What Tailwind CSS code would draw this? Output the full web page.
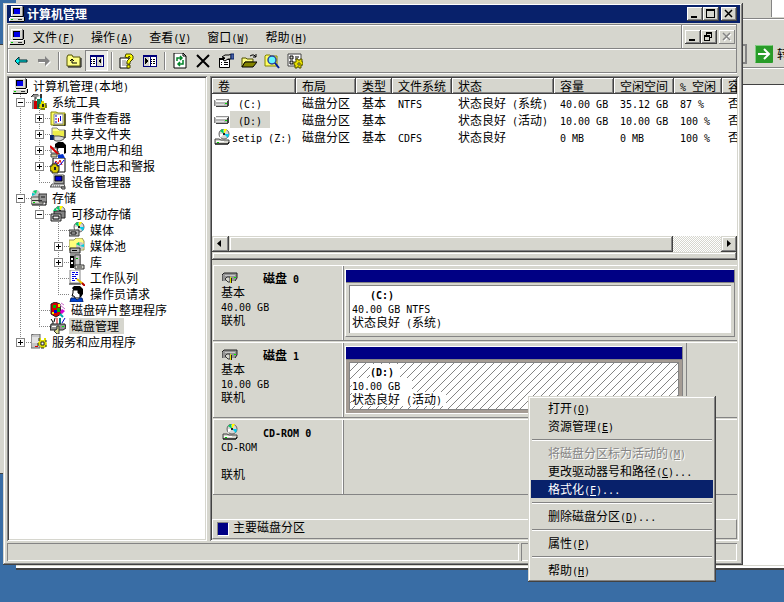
<!DOCTYPE html>
<html lang="zh-CN">
<head>
  <meta charset="UTF-8">
  <title>计算机管理</title>
  <script src="https://cdn.jsdelivr.net/npm/@tailwindcss/browser@4"></script>
</head>
<body class="relative h-screen overflow-hidden bg-[#396da5] font-['Noto_Sans_CJK_SC',sans-serif] text-xs leading-[14px] text-black select-none">

  <!-- icons -->
  <svg class="absolute size-0" aria-hidden="true" xmlns="http://www.w3.org/2000/svg">
    <defs>
      <symbol id="pc" viewBox="0 0 16 16"><path d="M3 0h11v10H3z" fill="#848484"/><path d="M2 0h11v10H2z" fill="#d6d6ce"/><path d="M2 0h11v1H3v9H2z" fill="#fff"/><path d="M4 2h7v6H4z" fill="#000"/><path d="M5 3h6v5H5z" fill="#0000e7"/><path d="M14 1h1v9h-1zM4 10h10v1H4z" fill="#000"/><path d="M1 11h14v4H1z" fill="#d6d6ce"/><path d="M1 11h13v1H1zM0 12h1v3H0z" fill="#fff"/><path d="M2 13h2v1H2z" fill="#0c0"/><path d="M9 13h4v1H9z" fill="#333"/><path d="M15 11h1v4h-1zM1 15h14v1H1z" fill="#000"/></symbol>
      <symbol id="tools" viewBox="0 0 16 16"><path d="M0 3l3-3h4l2 2-3 1v2H4V3z" fill="#949494"/><path d="M0 3l3-3h4M4 3v4" fill="none" stroke="#222"/><path d="M9 0h2v5H9z" fill="#333"/><path d="M3 7h3v8H3z" fill="#c00"/><path d="M6 5h3v10H6z" fill="#087b4a"/><path d="M9 4h2v8H9z" fill="#00a5ce"/><path d="M1 6h2v9H1z" fill="#848484"/><path d="M10 7h3v2h2v2h1v3h-2v2h-4v-2H8v-4h2z" fill="#dede00"/><path d="M10 7h1M8 10v3M15 9v5M9 15h5" stroke="#222"/><path d="M11 10h2v3h-2z" fill="#222"/></symbol>
      <symbol id="event" viewBox="0 0 16 16"><path d="M1 2h5l2 1h7v12H1z" fill="#ffff63" stroke="#848400"/><path d="M4 4h9v10H4z" fill="#fff" stroke="#848484"/><path d="M6 5v8" stroke="#00c" stroke-dasharray="2 1"/><path d="M8 8h1v4H8z" fill="#d00"/><path d="M10 6h1v5h-1z" fill="#00d"/><path d="M15 4v12H3" fill="none" stroke="#000"/></symbol>
      <symbol id="share" viewBox="0 0 16 16"><path d="M2 2h5l2 2h6v8H2z" fill="#ffff8c" stroke="#848484"/><path d="M3 5h11v6H3z" fill="#eded4a"/><path d="M0 9h4v5H0z" fill="#08246b"/><path d="M4 10h5l5 1v2l-4 2H6l-2-1z" fill="#d6d6d6" stroke="#555"/><path d="M15 4v8" stroke="#000"/></symbol>
      <symbol id="users" viewBox="0 0 16 16"><path d="M5 2l3-2h5l3 3v8l-2 1V6H9L7 8 5 5z" fill="#000"/><path d="M8 6h5v5l-2 2H8z" fill="#fff"/><path d="M8 6l-1 3h1v3h2" fill="none" stroke="#000"/><path d="M1 6h6v5H1z" fill="#fff" stroke="#555"/><path d="M0 4l8 8" stroke="#d00" stroke-width="2"/><path d="M1 12h6v3H1z" fill="#cfcfa0" stroke="#444"/><path d="M8 13l5-1 2 4H8z" fill="#0031ce"/></symbol>
      <symbol id="perf" viewBox="0 0 16 16"><path d="M3 0h12v14H3z" fill="#fff" stroke="#000"/><path d="M4 7l2-4 2 3 2-4 2 5" fill="none" stroke="#d00"/><path d="M5 4l3 4 3-2 3-4" fill="none" stroke="#00d"/><path d="M2 6h5v2h2v5H8v2H2v-2H0V8h2z" fill="#d6c600" stroke="#222"/><path d="M4 9h2v3H4z" fill="#222"/></symbol>
      <symbol id="device" viewBox="0 0 16 16"><path d="M4 0h9v9H4z" fill="#d6d6ce" stroke="#848484"/><path d="M5 2h7v5H5z" fill="#0000d6" stroke="#000"/><path d="M14 1v9H4" fill="none" stroke="#000"/><path d="M2 10h12l1 3H0z" fill="#e7e7e7" stroke="#555"/><path d="M1 12h10" stroke="#555" stroke-dasharray="1 1"/><path d="M11 13h4v2h-3z" fill="#c6c6c6" stroke="#333"/></symbol>
      <symbol id="storage" viewBox="0 0 16 16"><circle cx="5" cy="4" r="4" fill="#c6c6c6"/><path d="M5 4L2 1l4-1z" fill="#00d66b"/><path d="M5 4L1 3v3z" fill="#0cc"/><path d="M0 7h12v7H0z" fill="#d6d6ce" stroke="#555"/><path d="M8 4h8v8H8z" fill="#949494" stroke="#333"/><path d="M1 10h10v1H1z" fill="#333"/><path d="M10 6h4v2h-4z" fill="#555"/><path d="M2 12h2v1H2z" fill="#0c0"/><path d="M1 15h14v-3" fill="none" stroke="#000"/></symbol>
      <symbol id="disc" viewBox="0 0 16 16"><circle cx="10" cy="5" r="5" fill="#d6d6d6" stroke="#636363"/><path d="M10 5L6 2l3-2z" fill="#0c6"/><path d="M10 5V0h3z" fill="#ff0"/><path d="M10 5l4 4 1-4z" fill="#0ce"/><path d="M10 5l-4 4 0-4z" fill="#fff"/><path d="M9 4h2v2H9z" fill="#222"/></symbol>
      <symbol id="media" viewBox="0 0 16 16"><use href="#disc" width="16" height="16"/><path d="M0 8h10v6H0z" fill="#b5b5b5" stroke="#333"/><path d="M2 10h5v2H2z" fill="#fff" stroke="#000"/></symbol>
      <symbol id="removable" viewBox="0 0 16 16"><use href="#disc" width="16" height="16"/><path d="M4 5h11v7H4z" fill="#848484" stroke="#222"/><path d="M1 8h10v7H1z" fill="#c6c6c6" stroke="#222"/><path d="M3 10h6v3H3z" fill="#eee" stroke="#000"/><path d="M3 5l2-3 2 3z" fill="#0c6"/></symbol>
      <symbol id="pool" viewBox="0 0 16 16"><path d="M0 2h5l2-2h6l2 3v9H0z" fill="#ffff7b" stroke="#949463"/><circle cx="11" cy="8" r="4" fill="#c6c6c6"/><path d="M11 8L7 6l3-2z" fill="#0c6"/><path d="M11 8l4 1v-3z" fill="#0cd"/><path d="M1 10h10v5H1z" fill="#b5b5b5" stroke="#222"/><path d="M3 12h5v1H3z" fill="#000"/></symbol>
      <symbol id="library" viewBox="0 0 16 16"><path d="M1 0h11v13H1z" fill="#949494"/><path d="M1 2h4v12H1z" fill="#000"/><path d="M2 4h2v2H2zM2 8h2v2H2z" fill="#fff"/><path d="M6 1h5v12H6z" fill="#c6c6c6" stroke="#555"/><path d="M7 4h2v1H7z" fill="#0a0"/><path d="M6 11h9v4H6z" fill="#d6d6ce" stroke="#333"/><path d="M8 13h5" stroke="#333"/></symbol>
      <symbol id="queue" viewBox="0 0 16 16"><path d="M1 0h10v13H1z" fill="#fff" stroke="#848484"/><path d="M3 2.500h3M7 2.500h2M3 4.500h2M6 4.500h3M3 6.500h4M3 8.500h2M6 8.500h2M3 10.500h3" stroke="#0000e7"/><path d="M0 14h12" stroke="#000"/><path d="M8 9l6 5" stroke="#e7c600" stroke-width="2"/><path d="M13 13l3 3" stroke="#b50000" stroke-width="2"/></symbol>
      <symbol id="operator" viewBox="0 0 16 16"><path d="M3 2l2-2h6l3 3v5l-2 3H9z" fill="#000"/><path d="M4 4h5v3l2 1v4H6l-1-2H3l1-3z" fill="#fff" stroke="#000"/><path d="M2 12h4l2 2 3-2h2l1 4H1z" fill="#0042ce" stroke="#08246b"/></symbol>
      <symbol id="defrag" viewBox="0 0 16 16"><path d="M1 2l4-2 5 2 1 10-5 3-5-3z" fill="#d60000" stroke="#222"/><path d="M3 3h3v3H3zM7 6h3v4H7z" fill="#00b500"/><path d="M4 8h3v3H4z" fill="#0000d6"/><path d="M8 2h2v3H8zM2 10h2v2H2z" fill="#ee0"/><path d="M10 3l5 4M11 1l3 2" stroke="#c6c"/><path d="M12 7l3 2-3 3-2-2z" fill="#d600d6"/><path d="M10 12l3 3" stroke="#0aa" stroke-width="2"/></symbol>
      <symbol id="diskmgmt" viewBox="0 0 16 16"><path d="M1 1l2 3v3M5 0l-1 4" fill="none" stroke="#000"/><path d="M7 0v6" stroke="#c00"/><path d="M10 0v7" stroke="#087b7b" stroke-width="2"/><path d="M15 0l-3 5" stroke="#00c"/><path d="M1 6h14l1 4-3 2H0z" fill="#949494" stroke="#222"/><path d="M2 8h4v1H2z" fill="#fff"/><path d="M12 8h2v1h-2z" fill="#0e0"/><path d="M7 8h2v8H7l-3-3 3-2z" fill="#dede8c" stroke="#333"/></symbol>
      <symbol id="services" viewBox="0 0 16 16"><path d="M0 1l3-1h6v14H0z" fill="#c6c6c6" stroke="#636363"/><path d="M1 4h7M1 6h7M1 8h7" stroke="#fff"/><path d="M4 12h3v1H4z" fill="#d00"/><path d="M8 4h2v2h3V4h2v3l1 3-1 3-2 1h-3l-1-2-2-1V8h1z" fill="#dede00"/><path d="M8 4v3M7 9v3M15 6v2M15 11v2M10 14h3" stroke="#222"/><path d="M10 8h3v3h-3z" fill="#fff" stroke="#222"/></symbol>

      <symbol id="drive" viewBox="0 0 16 16"><path d="M2 4h13l-2 3H0z" fill="#e7e7e7"/><path d="M1 6h13v5H1z" fill="#b5b5b5"/><path d="M2 4h13v1H2z" fill="#949494"/><path d="M2 6h11v1H2z" fill="#fff"/><path d="M2 9h8v1H2z" fill="#dedede"/><path d="M15 5v5l-2 2H2v-1h11V6z" fill="#424242"/><path d="M0 5h1v6H0z" fill="#848484"/><path d="M11 8h2v1h-2z" fill="#0d0"/></symbol>
      <symbol id="cdrom" viewBox="0 0 16 16"><use href="#disc" width="16" height="16"/><path d="M1 10h4l2 1h8v3l-1 1H1z" fill="#d6d6ce" stroke="#424242"/><path d="M2 12h8v1H2z" fill="#fff"/><path d="M3 13h2v1H3z" fill="#0c0"/><path d="M1 15h13l1-2" fill="none" stroke="#000"/></symbol>
      <symbol id="disk" viewBox="0 0 16 12"><path d="M2 1h13v5l-2 3H0V4z" fill="#949494"/><path d="M2 1h13v5l-2 3M0 9V3l2-2" fill="none" stroke="#222"/><path d="M3 3h10v1H3z" fill="#c6c6c6"/><path d="M12 5h2v1h-2z" fill="#0e0"/><path d="M3 7l2-2h3v5H6z" fill="#d6d6ce" stroke="#333"/><path d="M8 5h1v6H8z" fill="#dede00"/><path d="M9 6h1v5H9z" fill="#222"/></symbol>

      <symbol id="back" viewBox="0 0 16 16"><path d="M2 8l4-4v3h8v2H6v3z" fill="#00efef" stroke="#002a31"/></symbol>
      <symbol id="forward" viewBox="0 0 16 16"><path d="M15 9l-5-5v3H3v3h7v4z" fill="#fff"/><path d="M14 8L9 3v3H2v3h7v4z" fill="#848484"/></symbol>
      <symbol id="up" viewBox="0 0 16 16"><path d="M1 4l1-2h4l1 2h7v9H1z" fill="#ffff84" stroke="#525200"/><path d="M15 5v9H2" fill="none" stroke="#000"/><path d="M6 6v4h5M4 8l2-2 2 2" fill="none" stroke="#000"/></symbol>
      <symbol id="pane-left" viewBox="0 0 16 16"><path d="M1 2h13v12H1z" fill="#fff"/><path d="M8 4h5v9H8z" fill="#d6d6ce"/><path d="M1 2h13v2H1z" fill="#00007b"/><path d="M1 2h13v11H1zM7 3v10" fill="none" stroke="#00007b"/><path d="M2 6h4M2 8h4M2 10h4" stroke="#000" stroke-dasharray="1 1 2 1"/><path d="M12 5v6L9 8z"/></symbol>
      <symbol id="pane-right" viewBox="0 0 16 16"><path d="M1 2h13v12H1z" fill="#fff"/><path d="M2 4h5v9H2z" fill="#d6d6ce"/><path d="M1 2h13v2H1z" fill="#00007b"/><path d="M1 2h13v11H1zM8 3v10" fill="none" stroke="#00007b"/><path d="M9 6h4M9 8h4M9 10h4" stroke="#000" stroke-dasharray="1 1 2 1"/><path d="M3 5v6l3-3z"/></symbol>
      <symbol id="help" viewBox="0 0 16 16"><path d="M1 5h9v10H1z" fill="#fff" stroke="#000"/><path d="M3 8h4M3 10h5M3 12h5" stroke="#848484"/><path d="M6 4l1-3h5l2 2v3l-3 3v2H8V8l3-3V4L10 3 9 5z" fill="#ffff00" stroke="#424200"/><path d="M8 12h3v3H8z" fill="#ff0" stroke="#424200"/></symbol>
      <symbol id="refresh" viewBox="0 0 16 16"><path d="M2 0h9l3 3v12H2z" fill="#fff" stroke="#000"/><path d="M11 0v3h3" fill="none" stroke="#000"/><path d="M5 8V5h4M8 3l2 2-2 2M11 7v4H7M8 9l-2 2 2 2" fill="none" stroke="#008429" stroke-width="1.5"/></symbol>
      <symbol id="delete" viewBox="0 0 16 16"><path d="M2 2l12 12M14 2L2 14" stroke="#000" stroke-width="2"/></symbol>
      <symbol id="props" viewBox="0 0 16 16"><path d="M1.500 5.500h10v9h-10z" fill="#fff" stroke="#000"/><path d="M1 5h11v2H1z"/><path d="M3 9.500h1M6 9.500h4M3 11.500h1M6 11.500h4" stroke="#000"/><path d="M4 4l3-2h4l2-1v5h-3L7 8 5 7l2-2z" fill="#d6d6ce" stroke="#000"/><path d="M13 1h3v5h-3z" fill="#4a63a5" stroke="#08246b"/></symbol>
      <symbol id="open" viewBox="0 0 16 16"><path d="M1 5h4l1 1h6v3H4l-3 5z" fill="#ffff84" stroke="#525200"/><path d="M4 9h12l-4 5H1z" fill="#848400" stroke="#000"/><path d="M9 3l2-1h2l2 2M15 1v3h-3" fill="none" stroke="#000"/></symbol>
      <symbol id="find" viewBox="0 0 16 16"><path d="M1 3l1-1h4l1 1h6v10H1z" fill="#ffff63" stroke="#848400"/><circle cx="8" cy="7" r="4" fill="#63f7ff" stroke="#31429c" stroke-width="1.5"/><path d="M11 10l4 5" stroke="#001f9c" stroke-width="2"/></symbol>
      <symbol id="settings" viewBox="0 0 16 16"><path d="M1 1h13v12H1z" fill="#fff" stroke="#424242"/><path d="M3 3h3v3H3zM3 8h3v3H3z" fill="#d6d6ce" stroke="#000"/><path d="M8 4h4M8 6h3" stroke="#000"/><path d="M9 6h2v1h2V6h2v3h1v3h-2v3h-2v-1h-2v1H8v-3H7V9h2z" fill="#e7de00" stroke="#525200"/><path d="M11 10h2v2h-2z" fill="#fff" stroke="#525200"/></symbol>

      <!-- tree guides, one 19px column each -->
      <symbol id="g-v" viewBox="0 0 19 16"><path d="M8.500 0v16" stroke="#848484" stroke-dasharray="1 1"/></symbol>
      <symbol id="g-t" viewBox="0 0 19 16"><path d="M8.500 0v16M8 8.500h11" stroke="#848484" stroke-dasharray="1 1"/></symbol>
      <symbol id="g-l" viewBox="0 0 19 16"><path d="M8.500 0v8M8 8.500h11" stroke="#848484" stroke-dasharray="1 1"/></symbol>
      <symbol id="g-m" viewBox="0 0 19 16"><use href="#g-t" width="19" height="16"/><path d="M4.500 4.500h8v8h-8z" fill="#fff" stroke="#848484"/><path d="M6 8.500h5" stroke="#000"/></symbol>
      <symbol id="g-p" viewBox="0 0 19 16"><use href="#g-m" width="19" height="16"/><path d="M8.500 6v5" stroke="#000"/></symbol>
      <symbol id="g-q" viewBox="0 0 19 16"><use href="#g-l" width="19" height="16"/><path d="M4.500 4.500h8v8h-8z" fill="#fff" stroke="#848484"/><path d="M6 8.500h5M8.500 6v5" stroke="#000"/></symbol>

      <pattern id="hatch" width="8" height="8" patternUnits="userSpaceOnUse"><path d="M-1 1l2-2M0 8l8-8M7 9l2-2" stroke="#848484"/></pattern>
      <pattern id="dither" width="2" height="2" patternUnits="userSpaceOnUse"><path d="M0 0h2v2H0z" fill="#fff"/><path d="M0 0h1v1H0zM1 1h1v1H1z" fill="#d6d6ce"/></pattern>
    </defs>
  </svg>

  <!-- window behind, left -->
  <div class="absolute top-[44px] left-0 h-[430px] w-[3px] border-y border-[#424242] bg-[#d6d6ce]"></div>

  <!-- browser window behind -->
  <div class="absolute top-0 right-0 bottom-[32px] left-[16px] flex flex-col border-b-2 border-[#424242] bg-[#d6d6ce]">
    <div class="flex h-[19px] justify-end border-b border-[#848484]">
      <div class="h-[17px] w-[13px] border-l border-[#848484] bg-white"></div>
    </div>
    <div class="flex h-[48px] items-center justify-end border-t border-white pt-[20px]">
      <div class="mr-[8px] h-[20px] w-[8px] border-2 border-[#848484] bg-[#d6d6ce]"></div>
      <button class="flex items-center gap-[4px] overflow-hidden" aria-label="转到">
        <svg class="size-[18px]" viewBox="0 0 18 18"><rect width="18" height="18" rx="1" fill="#299c29"/><path d="M.5 17.500V.5h17" fill="none" stroke="#84ce84"/><path d="M3 9h11M9 4l5 5-5 5" fill="none" stroke="#fff" stroke-width="2"/></svg>
        <span class="w-[7px] overflow-hidden whitespace-nowrap">转</span>
      </button>
    </div>
    <div class="h-[18px] border-y border-t-[#848484] border-b-[#424242] shadow-[inset_0_1px_0_#fff]"></div>
    <div class="flex-1 bg-white"></div>
    <div class="h-[3px] border-t border-[#d6d6ce] bg-white"></div>
  </div>

  <!-- main window -->
  <main class="absolute top-[3px] right-[41px] bottom-[37px] left-[3px] flex flex-col bg-[#d6d6ce] px-[4px] pt-[2px] pb-[4px] shadow-[inset_-1px_-1px_0_#424242,inset_1px_1px_0_#d6d6ce,inset_-2px_-2px_0_#848484,inset_2px_2px_0_#fff]">

    <header class="mr-[-1px] flex h-[18px] shrink-0 items-center bg-[#08216b] pr-[3px] pl-[2px] text-white">
      <svg class="size-4" shape-rendering="crispEdges"><use href="#pc"/></svg>
      <h1 class="ml-[2px] flex-1 font-bold">计算机管理</h1>
      <button aria-label="最小化" class="h-[14px] w-[16px] bg-[#d6d6ce] shadow-[inset_-1px_-1px_0_#424242,inset_1px_1px_0_#fff,inset_-2px_-2px_0_#848484]"><svg class="h-[14px] w-[16px]" shape-rendering="crispEdges"><path d="M4 9h6v2H4z"/></svg></button>
      <button aria-label="最大化" class="h-[14px] w-[16px] bg-[#d6d6ce] shadow-[inset_-1px_-1px_0_#424242,inset_1px_1px_0_#fff,inset_-2px_-2px_0_#848484]"><svg class="h-[14px] w-[16px]" shape-rendering="crispEdges"><path d="M3 2h9v9H3zM4 4v6h7V4z" fill-rule="evenodd"/></svg></button>
      <button aria-label="关闭" class="ml-[2px] h-[14px] w-[16px] bg-[#d6d6ce] shadow-[inset_-1px_-1px_0_#424242,inset_1px_1px_0_#fff,inset_-2px_-2px_0_#848484]"><svg class="h-[14px] w-[16px]"><path d="M4 3l7 7M11 3l-7 7" stroke="#000" stroke-width="1.500"/></svg></button>
    </header>

    <nav class="mt-[1px] mr-[2px] flex h-[25px] shrink-0 items-stretch border border-[#848484] shadow-[inset_1px_1px_0_#fff,0_1px_0_#fff]">
      <svg class="mt-[4px] ml-[1px] size-4" shape-rendering="crispEdges"><use href="#pc"/></svg>
      <button class="px-[8px]">文件(<u>F</u>)</button>
      <button class="px-[8px]">操作(<u>A</u>)</button>
      <button class="px-[8px]">查看(<u>V</u>)</button>
      <button class="px-[8px]">窗口(<u>W</u>)</button>
      <button class="px-[8px]">帮助(<u>H</u>)</button>
      <div class="ml-auto flex items-center border-l border-[#848484] pr-[1px] pl-[3px] shadow-[inset_1px_1px_0_#fff]">
        <button aria-label="最小化窗口" class="h-[14px] w-[16px] shadow-[inset_-1px_-1px_0_#424242,inset_1px_1px_0_#fff,inset_-2px_-2px_0_#848484]"><svg class="h-[14px] w-[16px]" shape-rendering="crispEdges"><path d="M4 9h6v2H4z"/></svg></button>
        <button aria-label="还原窗口" class="h-[14px] w-[16px] shadow-[inset_-1px_-1px_0_#424242,inset_1px_1px_0_#fff,inset_-2px_-2px_0_#848484]"><svg class="h-[14px] w-[16px]" shape-rendering="crispEdges"><path d="M5 2h6v6H9V7h1V4H6v1H5zM3 5h6v6H3zM4 7v3h4V7z" fill-rule="evenodd"/></svg></button>
        <button aria-label="关闭窗口" disabled class="ml-[2px] h-[14px] w-[16px] shadow-[inset_-1px_-1px_0_#848484,inset_1px_1px_0_#fff]"><svg class="h-[14px] w-[16px]"><path d="M5 4l7 7M12 4l-7 7" stroke="#fff" stroke-width="1.500"/><path d="M4 3l7 7M11 3l-7 7" stroke="#848484" stroke-width="1.500"/></svg></button>
      </div>
    </nav>

    <div class="mr-[2px] flex h-[24px] shrink-0 items-center border border-t-0 border-[#848484] pl-[1px] shadow-[inset_1px_1px_0_#fff,0_1px_0_#fff]" role="toolbar">
      <button aria-label="后退" class="flex h-[20px] w-[23px] items-center justify-center"><svg class="size-4"><use href="#back"/></svg></button>
      <button aria-label="前进" class="flex h-[20px] w-[23px] items-center justify-center"><svg class="size-4"><use href="#forward"/></svg></button>
      <span class="mr-[2px] ml-[3px] h-[18px] w-[2px] border-l border-[#848484] bg-white"></span>
      <button aria-label="上一级" class="flex h-[20px] w-[23px] items-center justify-center"><svg class="size-4"><use href="#up"/></svg></button>
      <button aria-label="显示/隐藏控制台树" aria-pressed="true" class="flex h-[21px] w-[23px] items-center justify-center bg-[#eaeae6] shadow-[inset_1px_1px_0_#848484,inset_-1px_-1px_0_#fff]"><svg class="size-4" shape-rendering="crispEdges"><use href="#pane-left"/></svg></button>
      <span class="mr-[2px] ml-[3px] h-[18px] w-[2px] border-l border-[#848484] bg-white"></span>
      <button aria-label="帮助" class="flex h-[20px] w-[23px] items-center justify-center"><svg class="size-4"><use href="#help"/></svg></button>
      <button aria-label="显示/隐藏操作窗格" class="flex h-[20px] w-[23px] items-center justify-center"><svg class="size-4" shape-rendering="crispEdges"><use href="#pane-right"/></svg></button>
      <span class="mr-[2px] ml-[3px] h-[18px] w-[2px] border-l border-[#848484] bg-white"></span>
      <button aria-label="刷新" class="flex h-[20px] w-[23px] items-center justify-center"><svg class="size-4"><use href="#refresh"/></svg></button>
      <button aria-label="删除" class="flex h-[20px] w-[23px] items-center justify-center"><svg class="size-4"><use href="#delete"/></svg></button>
      <button aria-label="属性" class="flex h-[20px] w-[23px] items-center justify-center"><svg class="size-4"><use href="#props"/></svg></button>
      <button aria-label="打开" class="flex h-[20px] w-[23px] items-center justify-center"><svg class="size-4"><use href="#open"/></svg></button>
      <button aria-label="浏览" class="flex h-[20px] w-[23px] items-center justify-center"><svg class="size-4"><use href="#find"/></svg></button>
      <button aria-label="设置" class="flex h-[20px] w-[23px] items-center justify-center"><svg class="size-4"><use href="#settings"/></svg></button>
    </div>

    <div class="mt-[3px] flex min-h-0 flex-1 gap-[3px]">
      <!-- console tree -->
      <aside class="w-[200px] shrink-0 bg-white p-[2px] pl-[5px] shadow-[inset_1px_1px_0_#848484,inset_-1px_-1px_0_#fff,inset_2px_2px_0_#424242,inset_-2px_-2px_0_#d6d6ce]">
        <ul id="tree"></ul>
      </aside>

      <section class="flex min-w-0 flex-1 flex-col p-[2px] shadow-[inset_1px_1px_0_#848484,inset_-1px_-1px_0_#fff,inset_2px_2px_0_#424242,inset_-2px_-2px_0_#d6d6ce]">
        <!-- volume list -->
        <div class="h-[158px] shrink-0 overflow-hidden bg-white">
          <table class="w-full table-fixed border-collapse text-left whitespace-nowrap">
            <thead>
              <tr class="h-[16px] *:overflow-hidden *:bg-[#d6d6ce] *:py-0 *:pl-[6px] *:font-normal *:shadow-[inset_-1px_-1px_0_#424242,inset_1px_1px_0_#fff,inset_-2px_-2px_0_#848484]">
                <th class="w-[84px]">卷</th>
                <th class="w-[60px]">布局</th>
                <th class="w-[36px]">类型</th>
                <th class="w-[60px]">文件系统</th>
                <th class="w-[102px]">状态</th>
                <th class="w-[60px]">容量</th>
                <th class="w-[60px]">空闲空间</th>
                <th class="w-[48px]">% 空闲</th>
                <th>容</th>
              </tr>
            </thead>
            <tbody>
              <tr class="h-[17px] *:overflow-hidden *:py-0 *:not-first:pl-[6px]">
                <td><div class="flex h-[17px] items-center pl-[2px]"><svg class="size-4 shrink-0" shape-rendering="crispEdges"><use href="#drive"/></svg><span class="px-[8px]">(C:)</span></div></td>
                <td>磁盘分区</td><td>基本</td><td>NTFS</td><td>状态良好 (系统)</td><td>40.00 GB</td><td>35.12 GB</td><td>87 %</td><td>否</td>
              </tr>
              <tr class="h-[17px] *:overflow-hidden *:py-0 *:not-first:pl-[6px]">
                <td><div class="flex h-[17px] items-center pl-[2px]"><svg class="size-4 shrink-0" shape-rendering="crispEdges"><use href="#drive"/></svg><span class="bg-[#d6d6ce] px-[8px] leading-[17px]">(D:)</span></div></td>
                <td>磁盘分区</td><td>基本</td><td></td><td>状态良好 (活动)</td><td>10.00 GB</td><td>10.00 GB</td><td>100 %</td><td>否</td>
              </tr>
              <tr class="h-[17px] *:overflow-hidden *:py-0 *:not-first:pl-[6px]">
                <td><div class="flex h-[17px] items-center pl-[2px]"><svg class="size-4 shrink-0"><use href="#cdrom"/></svg><span class="px-[2px]">setip (Z:)</span></div></td>
                <td>磁盘分区</td><td>基本</td><td>CDFS</td><td>状态良好</td><td>0 MB</td><td>0 MB</td><td>100 %</td><td>否</td>
              </tr>
            </tbody>
          </table>
        </div>
        <div class="flex h-[16px] shrink-0">
          <button aria-label="向左滚动" class="h-[16px] w-[17px] shadow-[inset_-1px_-1px_0_#424242,inset_1px_1px_0_#d6d6ce,inset_-2px_-2px_0_#848484,inset_2px_2px_0_#fff]"><svg class="h-[16px] w-[16px]"><path d="M9 4v7L5 7.500z"/></svg></button>
          <div class="flex-[445] shadow-[inset_-1px_-1px_0_#424242,inset_1px_1px_0_#d6d6ce,inset_-2px_-2px_0_#848484,inset_2px_2px_0_#fff]"></div>
          <svg class="h-[16px] min-w-0 flex-[48]"><rect width="100%" height="100%" fill="url(#dither)"/></svg>
          <button aria-label="向右滚动" class="h-[16px] w-[16px] shadow-[inset_-1px_-1px_0_#424242,inset_1px_1px_0_#d6d6ce,inset_-2px_-2px_0_#848484,inset_2px_2px_0_#fff]"><svg class="h-[16px] w-[16px]"><path d="M6 4v7l4-3.500z"/></svg></button>
        </div>
        <!-- splitter -->
        <div class="h-[8px] shrink-0 shadow-[inset_-1px_-1px_0_#424242,inset_1px_1px_0_#d6d6ce,inset_-2px_-2px_0_#848484,inset_2px_2px_0_#fff]"></div>

        <!-- graphical view -->
        <div class="flex flex-1 flex-col gap-[1px] pt-[5px] pl-[1px]">
          <article class="flex h-[76px] border-t border-b border-t-white border-b-[#848484]">
            <div class="w-[131px] shrink-0 border-r border-[#848484] pt-[5px] pl-[8px] shadow-[inset_1px_0_0_#fff,inset_-1px_0_0_#fff] *:h-[14px]">
              <h2 class="flex items-center gap-[25px] font-bold"><svg class="ml-[1px] h-[12px] w-[16px]"><use href="#disk"/></svg>磁盘 0</h2>
              <p>基本</p><p>40.00 GB</p><p>联机</p>
            </div>
            <div class="mt-[3px] mr-[2px] mb-[3px] ml-[1px] flex flex-1 flex-col border border-t-white border-r-[#848484] border-b-[#848484] border-l-white">
              <div class="h-[13px] border-b border-[#848484] bg-[#000084]"></div>
              <div class="mx-[3px] mt-[2px] mb-[3px] flex-1 border-t border-l border-[#848484] bg-white pt-[1px] pl-[2px] *:h-[14px]">
                <h3 class="pl-[18px] font-bold">(C:)</h3>
                <p>40.00 GB NTFS</p><p>状态良好 (系统)</p>
              </div>
            </div>
          </article>
          <article class="flex h-[76px] border-t border-b border-t-white border-b-[#848484]">
            <div class="w-[131px] shrink-0 border-r border-[#848484] pt-[5px] pl-[8px] shadow-[inset_1px_0_0_#fff,inset_-1px_0_0_#fff] *:h-[14px]">
              <h2 class="flex items-center gap-[25px] font-bold"><svg class="ml-[1px] h-[12px] w-[16px]"><use href="#disk"/></svg>磁盘 1</h2>
              <p>基本</p><p>10.00 GB</p><p>联机</p>
            </div>
            <div class="mr-[50px] flex flex-1 border-r border-[#848484] py-[3px] pr-[3px] pl-[1px]">
              <div class="flex flex-1 flex-col border border-t-white border-r-[#848484] border-b-white border-l-white bg-[#a59c94]">
                <div class="h-[13px] border-b border-[#848484] bg-[#000084]"></div>
                <div class="relative mx-[3px] mt-[2px] mb-[3px] flex-1 border border-[#848484] bg-white pt-[1px] pl-[2px]">
                  <svg class="absolute inset-0 size-full"><rect width="100%" height="100%" fill="url(#hatch)"/></svg>
                  <h3 class="relative ml-[18px] h-[14px] w-[30px] bg-white font-bold">(D:)</h3>
                  <p class="relative h-[14px] w-[60px] bg-white">10.00 GB</p>
                  <p class="relative h-[14px] w-[94px] bg-white">状态良好 (活动)</p>
                </div>
              </div>
            </div>
          </article>
          <article class="flex h-[76px] border-t border-b border-t-white border-b-[#848484]">
            <div class="w-[131px] shrink-0 border-r border-[#848484] pt-[5px] pl-[8px] shadow-[inset_1px_0_0_#fff,inset_-1px_0_0_#fff] *:h-[14px]">
              <h2 class="flex items-center gap-[25px] font-bold"><svg class="ml-[1px] size-4"><use href="#cdrom"/></svg>CD-ROM 0</h2>
              <p>CD-ROM</p><p class="mt-[14px]">联机</p>
            </div>
          </article>
          <div class="mt-auto ml-[-1px] flex h-[20px] items-start gap-[4px] border border-t-white border-r-[#848484] border-b-[#848484] border-l-white pl-[4px]">
            <span class="mt-[2px] h-[14px] w-[12px] border border-t-[#848484] border-r-white border-b-white border-l-[#848484] bg-[#000084]"></span>主要磁盘分区
          </div>
        </div>
      </section>
    </div>

    <footer class="mt-[2px] mr-[2px] flex h-[18px] shrink-0 gap-[2px]">
      <div class="flex-[513] shadow-[inset_1px_1px_0_#848484,inset_-1px_-1px_0_#fff]"></div>
      <div class="flex-[216] shadow-[inset_1px_1px_0_#848484,inset_-1px_-1px_0_#fff]"></div>
    </footer>
  </main>

  <!-- context menu -->
  <div role="menu" class="absolute top-[396px] left-[528px] flex w-[188px] flex-col bg-[#d6d6ce] p-[3px] shadow-[inset_-1px_-1px_0_#424242,inset_1px_1px_0_#d6d6ce,inset_-2px_-2px_0_#848484,inset_2px_2px_0_#fff]">
    <button role="menuitem" class="h-[18px] px-[17px] text-left">打开(<u>O</u>)</button>
    <button role="menuitem" class="h-[18px] px-[17px] text-left">资源管理(<u>E</u>)</button>
    <hr class="mx-[1px] my-[4px] h-[1px] border-t border-[#848484] shadow-[0_1px_0_#fff]">
    <button role="menuitem" disabled class="h-[18px] px-[17px] text-left whitespace-nowrap text-[#848484] text-shadow-[1px_1px_0_#fff]">将磁盘分区标为活动的(<u>M</u>)</button>
    <button role="menuitem" class="h-[18px] px-[17px] text-left whitespace-nowrap">更改驱动器号和路径(<u>C</u>)...</button>
    <button role="menuitem" class="h-[18px] bg-[#08216b] px-[17px] text-left text-white">格式化(<u>F</u>)...</button>
    <hr class="mx-[1px] my-[4px] h-[1px] border-t border-[#848484] shadow-[0_1px_0_#fff]">
    <button role="menuitem" class="h-[18px] px-[17px] text-left">删除磁盘分区(<u>D</u>)...</button>
    <hr class="mx-[1px] my-[4px] h-[1px] border-t border-[#848484] shadow-[0_1px_0_#fff]">
    <button role="menuitem" class="h-[18px] px-[17px] text-left">属性(<u>P</u>)</button>
    <hr class="mx-[1px] my-[4px] h-[1px] border-t border-[#848484] shadow-[0_1px_0_#fff]">
    <button role="menuitem" class="h-[18px] px-[17px] text-left">帮助(<u>H</u>)</button>
  </div>

  <script>
    // guides: v line, t tee, l corner, m minus box, p plus box, q last plus box
    const nodes = [
      ["", "pc", "计算机管理(本地)"],
      ["m", "tools", "系统工具"],
      ["vp", "event", "事件查看器"],
      ["vp", "share", "共享文件夹"],
      ["vp", "users", "本地用户和组"],
      ["vp", "perf", "性能日志和警报"],
      ["vl", "device", "设备管理器"],
      ["m", "storage", "存储"],
      ["vm", "removable", "可移动存储"],
      ["vvt", "media", "媒体"],
      ["vvp", "pool", "媒体池"],
      ["vvp", "library", "库"],
      ["vvt", "queue", "工作队列"],
      ["vvl", "operator", "操作员请求"],
      ["vt", "defrag", "磁盘碎片整理程序"],
      ["vl", "diskmgmt", "磁盘管理", true],
      ["q", "services", "服务和应用程序"]
    ];

    document.getElementById("tree").innerHTML = nodes.map(([guides, icon, text, selected]) => {
      const cols = [...guides].map(g => `<svg class="h-[16px] w-[19px]" shape-rendering="crispEdges"><use href="#g-${g}"/></svg>`).join("");
      return `<li class="flex h-[16px] items-center whitespace-nowrap">${cols}<svg class="mr-[3px] size-4"><use href="#${icon}"/></svg><span class="${selected ? "bg-[#d6d6ce] pr-[5px] pl-[2px] leading-[16px]" : "px-[2px] leading-[16px]"}">${text}</span></li>`;
    }).join("");

    // latin runs are half as wide as a chinese character
    const walker = document.createTreeWalker(document.body, NodeFilter.SHOW_TEXT);
    const texts = [];
    while (walker.nextNode()) {
      const n = walker.currentNode;
      if (n.data.trim() && !n.parentElement.closest("script, svg")) texts.push(n);
    }
    texts.forEach(n => {
      const box = document.createElement("span");
      box.innerHTML = n.data.trim().replace(/[\x20-\x7e]+/g, `<span class="font-['DejaVu_Sans_Mono',monospace] text-[10px] leading-none whitespace-pre">$&</span>`);
      n.replaceWith(box);
    });
  </script>
</body>
</html>
